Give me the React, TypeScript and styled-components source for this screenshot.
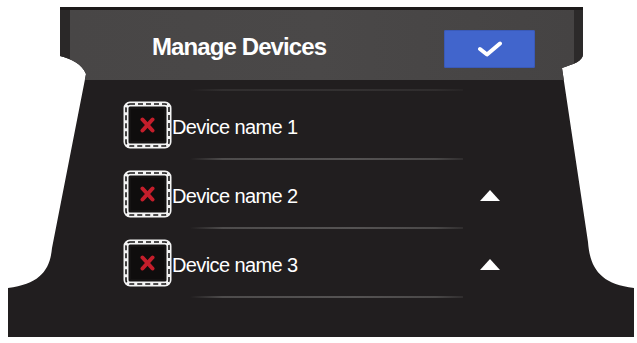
import React from "react";
import styled, { createGlobalStyle } from "styled-components";

const GlobalStyle = createGlobalStyle`
  html, body { margin: 0; padding: 0; background: #ffffff; }
  body { font-family: "Liberation Sans", Arial, sans-serif; }
`;

const Frame = styled.div`
  width: 637px;
  height: 343px;
  box-sizing: border-box;
  padding-top: 7px;
  display: flex;
  flex-direction: column;
  background: #211e1f;
  clip-path: path("M60,7 H583 V54 C583,61 574,64 562,68 L588,242 C590,268 600,284 634,288 V337 H8 V288 C40,284 50,270 52,248 L86,74 C82,64 72,59 60,56 Z");
`;

const Header = styled.div`
  height: 73px;
  box-sizing: border-box;
  display: flex;
  align-items: flex-start;
  padding: 20px 102px 0 152px;
  border-top: 3px solid #1c1a1a;
  background: linear-gradient(90deg, #2a2828 0, #2a2828 70px, #484646 70px, #4a4848 50%, #454343 574px, #2c2a2a 574px);
`;

const Title = styled.h1`
  margin: 5px 0 0 0;
  font-family: "Liberation Sans", Arial, sans-serif;
  font-weight: 700;
  font-size: 24px;
  line-height: 24px;
  letter-spacing: -0.9px;
  color: #ffffff;
`;

const ConfirmButton = styled.button`
  margin-left: auto;
  width: 91px;
  height: 38px;
  border: none;
  border-radius: 2px;
  padding: 0;
  display: flex;
  align-items: center;
  justify-content: center;
  background: #4165cc;
  box-shadow: inset 0 0 0 1px #3a5ab8;
`;

const Body = styled.div`
  display: flex;
  flex-direction: column;
  padding-top: 9px;
`;

const Divider = styled.div`
  margin-left: 190px;
  width: 273px;
  height: 2px;
  background: linear-gradient(90deg, rgba(90, 88, 88, 0) 0%, #4e4c4c 12%, #555353 60%, #4a4848 90%, rgba(80, 78, 78, 0.3) 100%);
`;

const TopDivider = styled(Divider)`
  opacity: 0.35;
`;

const Row = styled.div`
  display: flex;
  align-items: center;
  height: 48px;
  padding: 10px 137px 9px 123px;
`;

const RemoveBox = styled.svg`
  width: 49px;
  height: 48px;
  flex: none;
`;

const Name = styled.span`
  margin-top: 4px;
  font-family: "Liberation Sans", Arial, sans-serif;
  font-size: 20px;
  letter-spacing: -0.6px;
  color: #ffffff;
  white-space: nowrap;
`;

const MoveUp = styled.div`
  margin-left: auto;
  margin-top: 3px;
  width: 20px;
  height: 11px;
  background: #ffffff;
  clip-path: polygon(50% 0, 100% 100%, 0 100%);
`;

const RemoveIcon = () => (
  <RemoveBox viewBox="0 0 49 48">
    <rect x="3" y="3" width="43" height="42" rx="4" fill="#151313" stroke="#f4f4f4" strokeWidth="5" />
    <rect x="3" y="3" width="43" height="42" rx="4" fill="none" stroke="#151313" strokeWidth="1.6" strokeDasharray="5 3" />
    <rect x="8" y="8" width="33" height="32" fill="#0f0d0d" />
    <g stroke="#d8202f" strokeWidth="4" strokeLinecap="round" opacity="0.9">
      <line x1="19.5" y1="18.5" x2="29.5" y2="29.5" />
      <line x1="29.5" y1="18.5" x2="19.5" y2="29.5" />
    </g>
  </RemoveBox>
);

const CheckIcon = () => (
  <svg width="26" height="16" viewBox="0 0 26 16">
    <path d="M3 8 L10 13.5 L23 2.5" fill="none" stroke="#ffffff" strokeWidth="4" strokeLinecap="round" strokeLinejoin="round" />
  </svg>
);

const devices = [
  { name: "Device name 1", canMoveUp: false },
  { name: "Device name 2", canMoveUp: true },
  { name: "Device name 3", canMoveUp: true },
];

export default function App() {
  return (
    <>
      <GlobalStyle />
      <Frame>
        <Header>
          <Title>Manage Devices</Title>
          <ConfirmButton aria-label="Done">
            <CheckIcon />
          </ConfirmButton>
        </Header>
        <Body>
          <TopDivider />
          {devices.map((d) => (
            <React.Fragment key={d.name}>
              <Row>
                <RemoveIcon />
                <Name>{d.name}</Name>
                {d.canMoveUp && <MoveUp />}
              </Row>
              <Divider />
            </React.Fragment>
          ))}
        </Body>
      </Frame>
    </>
  );
}
